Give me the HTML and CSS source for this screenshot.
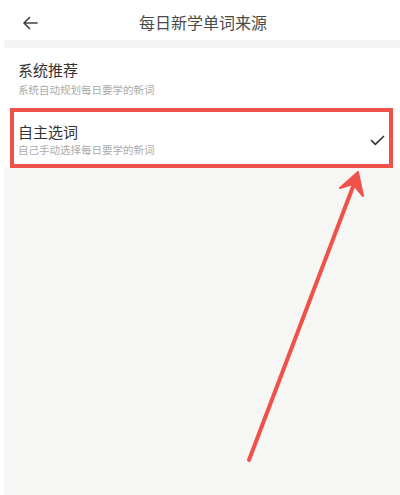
FILE: index.html
```html
<!DOCTYPE html>
<html lang="zh-CN">
<head>
    <meta charset="UTF-8">
    <meta name="viewport" content="width=device-width, initial-scale=1.0">
    <title>每日新学单词来源</title>
    <link rel="stylesheet" href="styles.css">
</head>
<body>

    <div class="header">
        <span class="back">
            <svg width="16" height="14" viewBox="0 0 16 14">
                <path d="M15 7H2M7.5 1.5L2 7l5.5 5.5" fill="none" stroke="#444" stroke-width="1.7" stroke-linecap="round" stroke-linejoin="round"/>
            </svg>
        </span>
        <span class="title">每日新学单词来源</span>
    </div>

    <div class="sep"></div>

    <div class="list">
        <div class="option">
            <div class="option-text">
                <div class="option-title">系统推荐</div>
                <div class="option-desc">系统自动规划每日要学的新词</div>
            </div>
        </div>
        <div class="mark">
            <div class="option selected">
                <div class="option-text">
                    <div class="option-title">自主选词</div>
                    <div class="option-desc">自己手动选择每日要学的新词</div>
                </div>
                <svg class="check" width="15" height="11" viewBox="0 0 15 11">
                    <path d="M1.5 5.5l3.8 3.8L13.5 1.5" fill="none" stroke="#333" stroke-width="1.7" stroke-linecap="round" stroke-linejoin="round"/>
                </svg>
            </div>
        </div>
    </div>

    <div class="rest"></div>

    <svg class="pointer" width="400" height="495" viewBox="0 0 400 495">
        <line x1="249" y1="460" x2="354" y2="184" stroke="#f0524a" stroke-width="4" stroke-linecap="round"/>
        <polygon points="358,172 340,188 353,184 363,196" fill="#f0524a" stroke="#f0524a" stroke-width="2" stroke-linejoin="round"/>
    </svg>

</body>
</html>
```

FILE: styles.css
```css
body {
    margin: 0;
    width: 400px;
    height: 495px;
    overflow: hidden;
    position: relative;
    background-color: #fff;
    font-family: "Noto Sans CJK SC", "Noto Sans", sans-serif;
    display: flex;
    flex-direction: column;
}
.header {
    height: 40px;
    display: flex;
    align-items: center;
    justify-content: center;
    position: relative;
}
.back {
    position: absolute;
    left: 22px;
    top: 16px;
    line-height: 0;
}
.title {
    font-size: 16px;
    color: #4a4a4a;
    margin-top: 3px;
    margin-left: 6px;
}
.sep {
    height: 8px;
    margin-left: 4px;
    background-color: #f4f4f4;
}
.option {
    display: flex;
    align-items: center;
    padding: 12px 18px 11px;
}
.option-title {
    font-size: 15px;
    line-height: 20px;
    color: #333;
}
.option-desc {
    font-size: 10.5px;
    line-height: 15px;
    color: #aaa;
    margin-top: 2px;
}
.option-text {
    flex: 1;
}
.mark {
    margin: 0 7px 0 10px;
    border: 4px solid #f0524a;
}
.option.selected {
    padding: 10px 4px 7px 4px;
}
.option.selected .option-desc {
    margin-top: 0;
}
.check {
    margin-top: 1px;
}
.rest {
    flex: 1;
    margin-left: 4px;
    background-color: #f6f6f5;
}
.pointer {
    position: absolute;
    left: 0;
    top: 0;
    pointer-events: none;
}
```
